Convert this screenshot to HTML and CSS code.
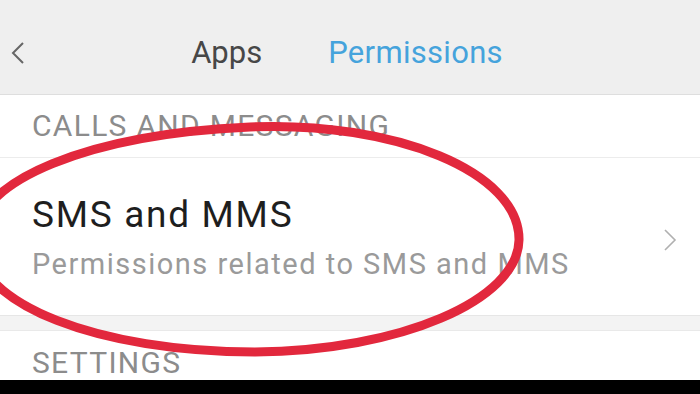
FILE: index.html
```html
<!DOCTYPE html>
<html lang="en">
<head>
    <meta charset="UTF-8">
    <meta name="viewport" content="width=device-width, initial-scale=1.0">
    <title>Permissions</title>
    <link rel="stylesheet" href="styles.css">
</head>
<body>
    <div class="screen">
        <div class="content">
            <div class="header">
                <div class="back">
                    <svg width="16" height="24" viewBox="0 0 16 24"><path d="M13 2 L3 12 L13 22" fill="none" stroke="#666" stroke-width="2"/></svg>
                </div>
                <div class="tabs">
                    <span class="tab">Apps</span>
                    <span class="tab active">Permissions</span>
                </div>
                <div class="spacer"></div>
            </div>
            <div class="section-title">CALLS AND MESSAGING</div>
            <div class="row">
                <div class="row-text">
                    <div class="row-title">SMS and MMS</div>
                    <div class="row-sub">Permissions related to SMS and MMS</div>
                </div>
                <svg class="chevron" width="14" height="24" viewBox="0 0 14 24"><path d="M2 2 L12 12 L2 22" fill="none" stroke="#b0b0b0" stroke-width="1.6"/></svg>
            </div>
            <div class="band"></div>
            <div class="section-title settings">SETTINGS</div>
        </div>
        <div class="nav-bar"></div>

        <!-- red marker circle drawn over the screenshot -->
        <svg class="marker" width="700" height="394" viewBox="0 0 700 394">
            <path d="M -25 240 C -25 180, 90 134, 250 127 C 395 121, 520 172, 519 240 C 518 300, 400 351, 255 352 C 100 352, -25 305, -25 240 Z" fill="none" stroke="#e2283d" stroke-width="9"/>
        </svg>
    </div>
</body>
</html>
```

FILE: styles.css
```css
body {
    margin: 0;
    padding: 0;
    font-family: Roboto, "Noto Sans", sans-serif;
    background-color: #fff;
}
.screen {
    position: relative;
    width: 700px;
    height: 394px;
    overflow: hidden;
}
.content {
    height: 380px;
    overflow: hidden;
    display: flex;
    flex-direction: column;
}
.header {
    height: 82px;
    padding-top: 12px;
    flex-shrink: 0;
    display: flex;
    align-items: center;
    background-color: #efefef;
    border-bottom: 1px solid #dedede;
}
.back {
    width: 40px;
    padding-left: 10px;
    display: flex;
    align-items: center;
    margin-top: -1px;
}
.spacer {
    width: 50px;
}
.tabs {
    flex: 1;
    display: flex;
    justify-content: center;
    gap: 66px;
    padding-right: 6px;
}
.tab {
    font-size: 31px;
    line-height: 82px;
    color: #474747;
}
.tab.active {
    color: #45a3dc;
    letter-spacing: 0.3px;
}
.section-title {
    flex-shrink: 0;
    height: 62px;
    line-height: 62px;
    padding-left: 32px;
    font-size: 30px;
    letter-spacing: 1.3px;
    color: #8c8c8c;
    border-bottom: 1px solid #ececec;
}
.row {
    flex-shrink: 0;
    height: 157px;
    display: flex;
    align-items: center;
    padding-left: 32px;
    padding-right: 23px;
    box-sizing: border-box;
}
.row-text {
    flex: 1;
    margin-top: 4px;
}
.row-title {
    font-size: 37px;
    line-height: 44px;
    letter-spacing: 1.7px;
    color: #1e1e1e;
}
.row-sub {
    font-size: 29px;
    line-height: 40px;
    letter-spacing: 1.5px;
    margin-top: 7px;
    color: #9a9a9a;
}
.chevron {
    margin-top: 6px;
}
.band {
    flex-shrink: 0;
    height: 14px;
    background-color: #f3f3f3;
    border-top: 1px solid #e6e6e6;
    border-bottom: 1px solid #e9e9e9;
}
.section-title.settings {
    border-bottom: none;
    height: 40px;
    line-height: 40px;
    padding-top: 12px;
}
.nav-bar {
    height: 14px;
    background-color: #000;
}
.marker {
    position: absolute;
    left: 0;
    top: 0;
}
```
